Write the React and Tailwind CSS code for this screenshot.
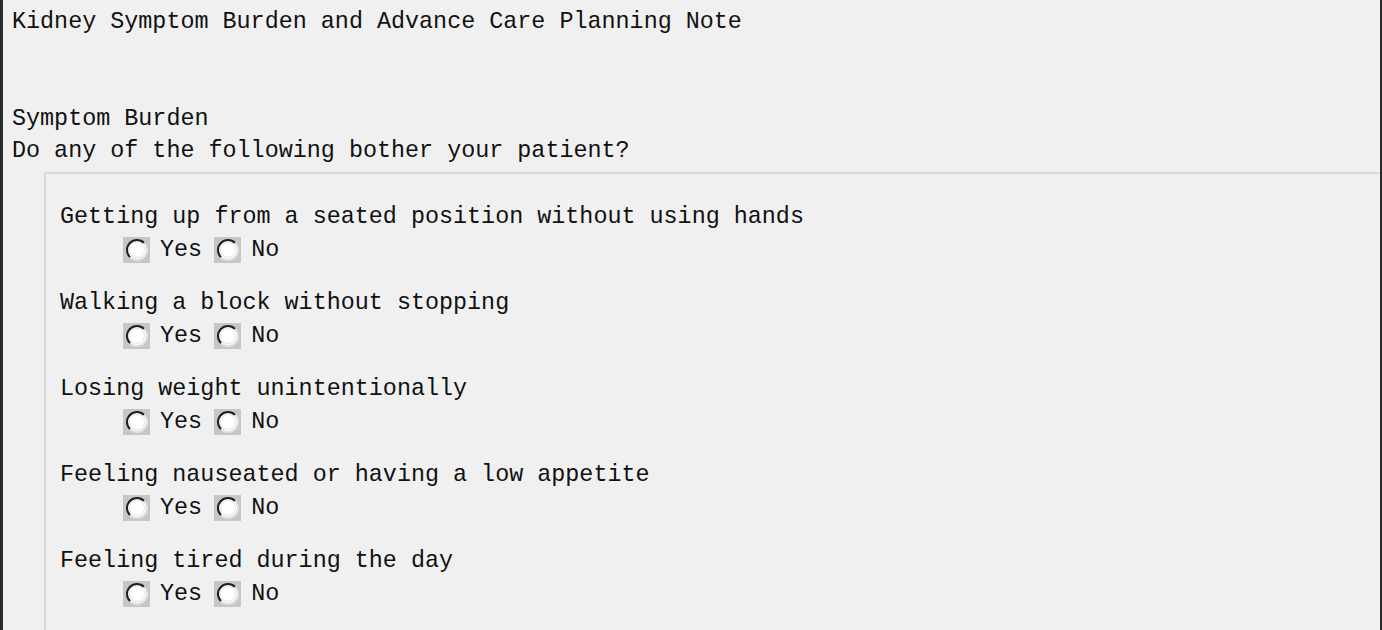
import React from 'react'

const questions = [
  'Getting up from a seated position without using hands',
  'Walking a block without stopping',
  'Losing weight unintentionally',
  'Feeling nauseated or having a low appetite',
  'Feeling tired during the day',
]

function Radio() {
  return (
    <span className="w-[27px] h-[26px] bg-[#c6c6c6] flex items-center justify-center shrink-0">
      <span className="w-[22px] h-[22px] rounded-full bg-white border-2 border-t-[#1e1e1e] border-l-[#1e1e1e] border-r-[#e2e2e2] border-b-[#e2e2e2] flex items-center justify-center">
        <span className="w-[16px] h-[16px] rounded-full border border-[#e4e4e4]" />
      </span>
    </span>
  )
}

export default function App() {
  return (
    <div
      className="w-[1382px] h-[630px] overflow-hidden bg-[#f0f0f0] border-l-[3px] border-r-[2px] border-[#2a2a2a] text-[#111] text-[23.4px] leading-[32px]"
      style={{ fontFamily: '"Courier New", "Liberation Mono", monospace' }}
    >
      <div className="pl-[9px] pt-[6px]">
        <div className="h-[32px] whitespace-pre">Kidney Symptom Burden and Advance Care Planning Note</div>
        <div className="h-[32px] whitespace-pre mt-[65px]">Symptom Burden</div>
        <div className="h-[32px] whitespace-pre">Do any of the following bother your patient?</div>
        <div className="ml-[32px] mt-[5px] border-t-2 border-l-2 border-[#d9d9d9] pt-[27px] pl-[14px] h-[600px]">
          {questions.map(q => (
            <div key={q} className="mb-[21px]">
              <div className="h-[33px] whitespace-pre">{q}</div>
              <div className="h-[32px] flex items-center pl-[63px]">
                <Radio />
                <span className="ml-[10px]">Yes</span>
                <span className="ml-[12px]"><Radio /></span>
                <span className="ml-[10px]">No</span>
              </div>
            </div>
          ))}
        </div>
      </div>
    </div>
  )
}
